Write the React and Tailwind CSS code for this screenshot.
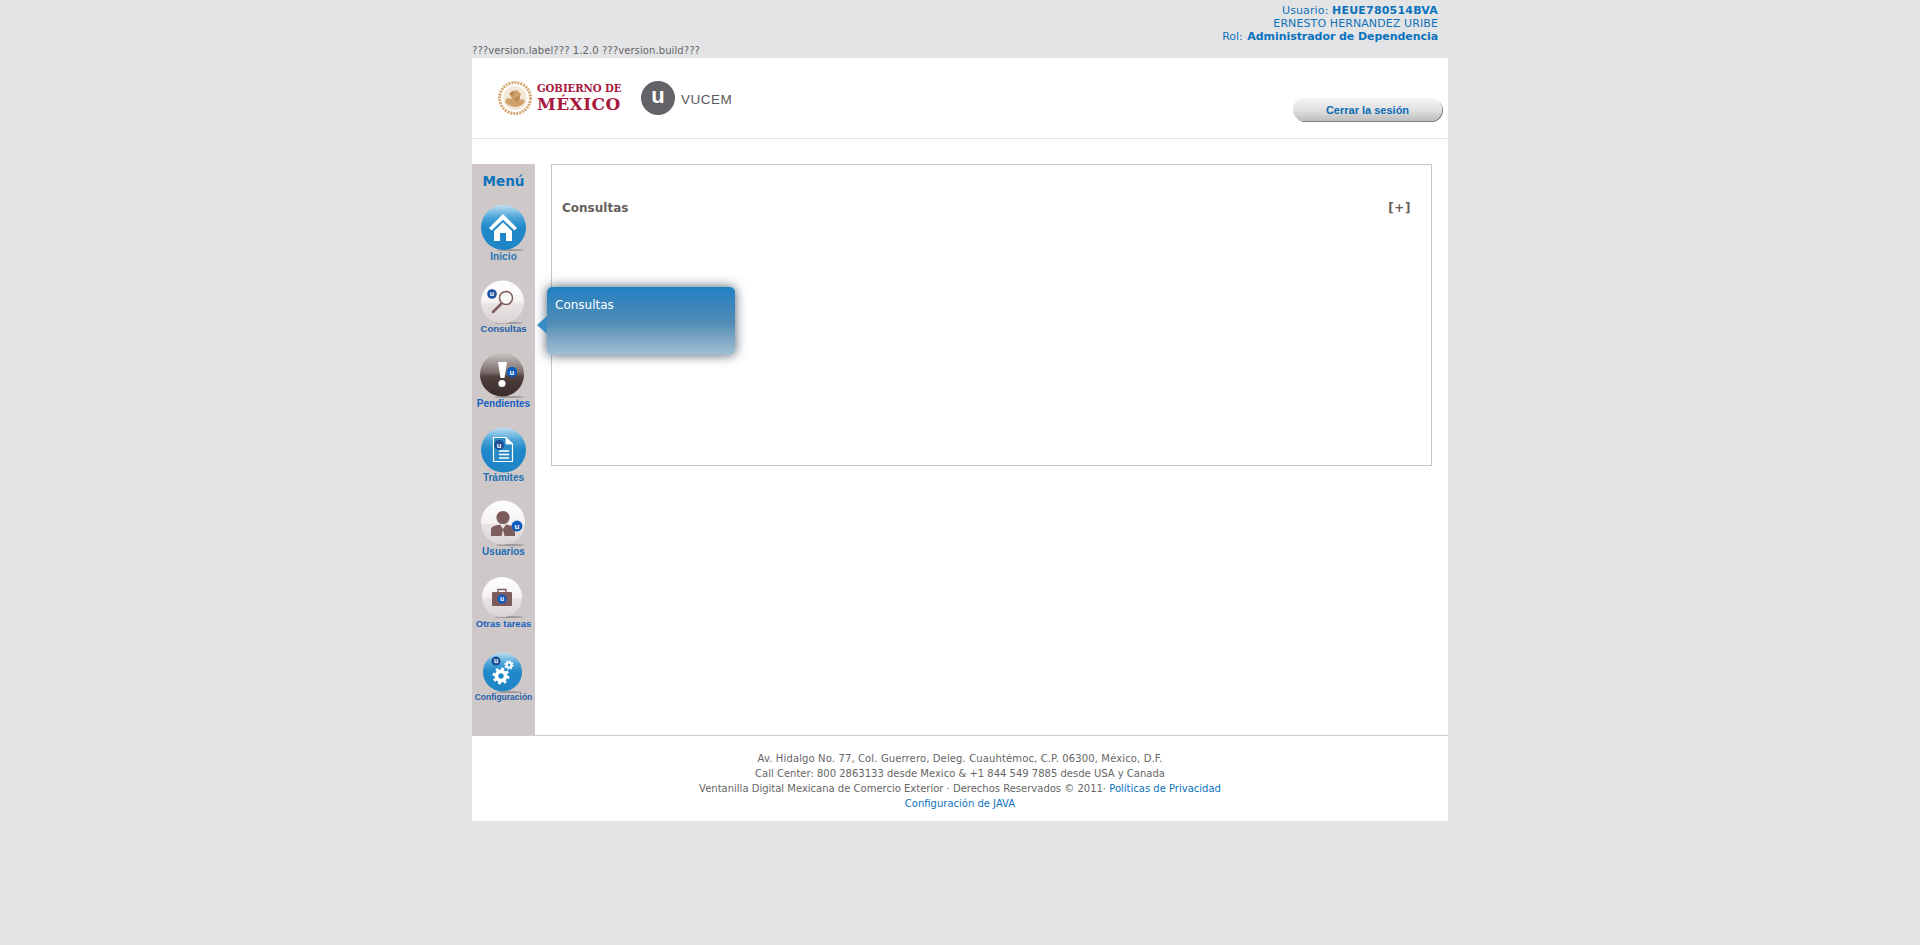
const Badge = ({ x, y, r = 5, c = "#0d5cbd" }) => (
  <g>
    <circle cx={x} cy={y} r={r} fill={c} />
    <text x={x} y={y + r * 0.5} textAnchor="middle" fontSize={r * 1.5} fontWeight="700" fill="#fff" fontFamily="Liberation Sans, sans-serif">u</text>
  </g>
);

const Floor = ({ x, y, w }) => <ellipse cx={x} cy={y} rx={w} ry="1" fill="#8f8a8a" opacity="0.75" />;

const Defs = () => (
  <svg width="0" height="0" className="absolute">
    <defs>
      <linearGradient id="orbBlue" x1="0" y1="0" x2="0" y2="1">
        <stop offset="0" stopColor="#bfe0f2" />
        <stop offset="0.28" stopColor="#4aa3d8" />
        <stop offset="0.5" stopColor="#1f88c8" />
        <stop offset="1" stopColor="#1f86c6" />
      </linearGradient>
      <linearGradient id="orbPale" x1="0" y1="0" x2="0" y2="1">
        <stop offset="0" stopColor="#ffffff" />
        <stop offset="0.5" stopColor="#f6f2f2" />
        <stop offset="0.55" stopColor="#e9e3e3" />
        <stop offset="1" stopColor="#dcd4d4" />
      </linearGradient>
      <linearGradient id="orbDark" x1="0" y1="0" x2="0" y2="1">
        <stop offset="0" stopColor="#c9c6c5" />
        <stop offset="0.45" stopColor="#7a6d6b" />
        <stop offset="0.55" stopColor="#4f3f3d" />
        <stop offset="1" stopColor="#3a2c2b" />
      </linearGradient>
    </defs>
  </svg>
);

const Gear = ({ x, y, r }) => (
  <g fill="none" stroke="#fff">
    <circle cx={x} cy={y} r={r * 0.85} strokeWidth={r * 0.7} />
    <circle cx={x} cy={y} r={r * 1.32} strokeWidth={r * 0.5} strokeDasharray={`${r * 0.52} ${r * 0.517}`} />
  </g>
);

const IconBox = ({ h, children }) => (
  <svg width="63" height={h} viewBox={`0 0 63 ${h}`} className="block overflow-visible">
    {children}
  </svg>
);

const icons = {
  inicio: (
    <IconBox h={46}>
      <Floor x={38} y={45} w={14} />
      <circle cx="31.5" cy="22.5" r="22.5" fill="url(#orbBlue)" />
      <path d="M31 9 45 23 42.5 25.5 31 14.5 19.5 25.5 17 23Z" fill="#fff" />
      <path d="M22 26 31 17.5 40 26V36H34V28H28V36H22Z" fill="#fff" />
    </IconBox>
  ),
  consultas: (
    <IconBox h={44}>
      <Floor x={37} y={44} w={14} />
      <circle cx="30.5" cy="23" r="21.5" fill="url(#orbPale)" />
      <line x1="29" y1="25" x2="21" y2="33" stroke="#7d5f5f" strokeWidth="2.6" strokeLinecap="round" />
      <circle cx="34" cy="19" r="6.5" fill="#fbf8f8" stroke="#7d5f5f" strokeWidth="1.5" />
      <Badge x={20} y={15} r={4.8} c="#1d4f9e" />
    </IconBox>
  ),
  pendientes: (
    <IconBox h={46}>
      <Floor x={37} y={45} w={15} />
      <circle cx="30" cy="22.5" r="22" fill="url(#orbDark)" />
      <path d="M26 10H35L32.5 26H28.5Z" fill="#fff" />
      <circle cx="30" cy="31.5" r="3.6" fill="#fff" />
      <Badge x={40} y={20} r={5.2} />
    </IconBox>
  ),
  tramites: (
    <IconBox h={45}>
      <circle cx="31.5" cy="23" r="22.5" fill="url(#orbBlue)" />
      <path d="M21.5 10.5H34L40.5 17V34.5H21.5Z" fill="#2a8bc9" stroke="#fff" strokeWidth="1.2" />
      <path d="M34 10.5V17H40.5" fill="#fff" stroke="#fff" strokeWidth="0.8" />
      <path d="M27 24H37M27 27.5H37M27 31H37" stroke="#fff" strokeWidth="1.4" />
      <Badge x={27} y={18} r={5} c="#1d4f96" />
    </IconBox>
  ),
  usuarios: (
    <IconBox h={46}>
      <Floor x={38} y={45} w={14} />
      <circle cx="31" cy="22.5" r="22" fill="url(#orbPale)" />
      <circle cx="31" cy="17.5" r="6.6" fill="#7d5c5e" />
      <path d="M19 36V30Q19 26 24 25.5L28 24.5 31 29 34 24.5 38 25.5Q43 26 43 30V36H32.5L31 29.5 29.5 36Z" fill="#7d5c5e" />
      <Badge x={45} y={26} r={5.4} />
    </IconBox>
  ),
  otras: (
    <IconBox h={44}>
      <Floor x={37} y={43} w={14} />
      <circle cx="30" cy="23" r="20" fill="url(#orbPale)" />
      <path d="M26 18V15.5H34V18" fill="none" stroke="#7d5c5e" strokeWidth="1.4" />
      <rect x="20" y="18" width="20" height="14" rx="1" fill="#7d5c5e" />
      <Badge x={30} y={25} r={4.6} />
    </IconBox>
  ),
  config: (
    <IconBox h={42}>
      <Floor x={37} y={43} w={13} />
      <circle cx="30.5" cy="23" r="19.5" fill="url(#orbBlue)" />
      <Gear x={29} y={27} r={5.4} />
      <Gear x={37} y={16} r={3} />
      <Badge x={24} y={12} r={4.6} c="#1d4f96" />
    </IconBox>
  ),
};

const menu = [
  { key: "inicio", label: "Inicio", box: "h-[74px]", color: "text-[#1d76b4]", size: "text-[10px] tracking-[0.1px]" },
  { key: "consultas", label: "Consultas", box: "h-[73px]", color: "text-[#2560a8]", size: "text-[9.5px]" },
  { key: "pendientes", label: "Pendientes", box: "h-[75px]", color: "text-[#1560c0]", size: "text-[10px]" },
  { key: "tramites", label: "Trámites", box: "h-[73px]", color: "text-[#1b70b4]", size: "text-[10px]" },
  { key: "usuarios", label: "Usuarios", box: "h-[74px]", color: "text-[#1c6cb4]", size: "text-[10px]" },
  { key: "otras", label: "Otras tareas", box: "h-[75px]", color: "text-[#1560c0]", size: "text-[9.5px]" },
  { key: "config", label: "Configuración", box: "h-[74px]", color: "text-[#1f5fa8]", size: "text-[8.5px]" },
];

const Seal = () => (
  <svg width="36" height="36" viewBox="0 0 36 36" className="block">
    <circle cx="18" cy="18" r="15.5" fill="none" stroke="#d4a871" strokeWidth="3" strokeDasharray="2 1" />
    <circle cx="18" cy="18" r="12" fill="#f4e8d8" />
    <path d="M8 22Q12 27 18 27T28 22L26 19 22 20 24 14 20 10 15 11 13 15 15 19 10 18Z" fill="#cfa26b" />
    <path d="M12 14l3-3 3 2-2 4zM17 19l5-4 1 4-3 3z" fill="#b98c55" />
  </svg>
);

export default function App() {
  return (
    <div className="min-h-[945px] bg-[#e3e4e6] font-['DejaVu_Sans',Verdana,sans-serif]">
      <Defs />
      <div className="w-[976px] mx-auto">
        <div className="h-[58px] relative">
          <div className="pt-[4px] pr-[10px] text-right text-[11px] leading-[13px] text-[#1272b8]">
            <div><span className="tracking-[0.12px]">Usuario: </span><b className="font-bold text-[#0b72bd] tracking-[0.2px]">HEUE780514BVA</b></div>
            <div className="tracking-[0.1px]">ERNESTO HERNANDEZ URIBE</div>
            <div>Rol: <span className="inline-block w-[1px]"></span><b className="font-bold text-[#0b72bd] tracking-[-0.06px]">Administrador de Dependencia</b></div>
          </div>
          <div className="absolute left-0 bottom-[1px] text-[10px] leading-[12px] tracking-[0.09px] text-[#666666]">???version.label??? 1.2.0 ???version.build???</div>
        </div>

        <div className="bg-white">
          <div className="h-[81px] ml-px mr-px border-b border-[#e3e3e3] flex items-start pl-[24px] relative">
            <div className="mt-[22px]"><Seal /></div>
            <div className="ml-[4px] mt-[24px] w-[86px] text-[#a8193f] font-['DejaVu_Serif',serif] font-bold">
              <div className="text-[10.2px] leading-[13px] tracking-[-0.1px] whitespace-nowrap">GOBIERNO DE</div>
              <div className="text-[17px] leading-[18px] tracking-[0.4px] whitespace-nowrap">MÉXICO</div>
            </div>
            <div className="ml-[18px] mt-[23px] w-[34px] h-[34px] rounded-full bg-[#636266] flex items-center justify-center text-white font-bold text-[22px] leading-none pb-[4px] font-['Liberation_Sans',sans-serif]">u</div>
            <div className="ml-[6px] mt-[33px] text-[13.5px] leading-[17px] tracking-[0.5px] text-[#58585b] font-['Liberation_Sans',sans-serif]">VUCEM</div>
            <button className="absolute right-[5px] top-[40px] w-[149px] h-[23px] pt-[1px] rounded-full bg-gradient-to-b from-[#f4f4f4] via-[#e2e2e2] to-[#bdbdbd] shadow-[1px_1px_0_#7f7f7f] text-[#0a6cb8] text-[11px] font-bold font-['Liberation_Sans',sans-serif]">Cerrar la sesión</button>
          </div>

          <div className="flex h-[596px] pt-[25px] relative">
            <div className="w-[63px] h-[571px] bg-[#cec8c8] shrink-0">
              <div className="h-[41px] pt-[8px] text-center text-[13.5px] leading-[18px] font-bold text-[#0b72bd]">Menú</div>
              {menu.map((m) => (
                <div key={m.key} className={m.box}>
                  {icons[m.key]}
                  <div className={`text-center font-bold font-['Liberation_Sans',sans-serif] leading-[12px] whitespace-nowrap ${m.size} ${m.color}`}>{m.label}</div>
                </div>
              ))}
            </div>

            <div className="ml-[16px] w-[881px] h-[302px] border border-[#c9c5c5] pt-[35px] pl-[10px] pr-[20px] flex justify-between items-start">
              <div className="text-[12px] leading-[16px] font-bold text-[#66605b]">Consultas</div>
              <div className="text-[12px] leading-[16px] font-bold text-[#6b6055] tracking-[0.6px]">[+]</div>
            </div>

            <div className="absolute left-[75px] top-[148px] w-[188px] h-[68px] rounded-[5px] bg-gradient-to-b from-[#1e81c2] via-[#4d8ab5] to-[#a3bfd2] shadow-[0_0_12px_rgba(30,50,70,0.8)] pl-[8px] pt-[9px] text-[12px] leading-[18px] text-white">
              Consultas
            </div>
            <div className="absolute left-[65px] top-[177px] w-0 h-0 border-y-[9px] border-y-transparent border-r-[10px] border-r-[#3a8bc2]"></div>
          </div>

          <div className="h-[86px] border-t border-[#cccccc] pt-[15px] text-center text-[10px] leading-[15px] text-[#666666]">
            <div className="tracking-[0.13px]">Av. Hidalgo No. 77, Col. Guerrero, Deleg. Cuauhtémoc, C.P. 06300, México, D.F.</div>
            <div>Call Center: 800 2863133 desde Mexico &amp; +1 844 549 7885 desde USA y Canada</div>
            <div>Ventanilla Digital Mexicana de Comercio Exterior · Derechos Reservados © 2011· <a className="text-[#0b72bd]">Políticas de Privacidad</a></div>
            <div><a className="text-[#0b72bd]">Configuración de JAVA</a></div>
          </div>
        </div>
      </div>
    </div>
  );
}
